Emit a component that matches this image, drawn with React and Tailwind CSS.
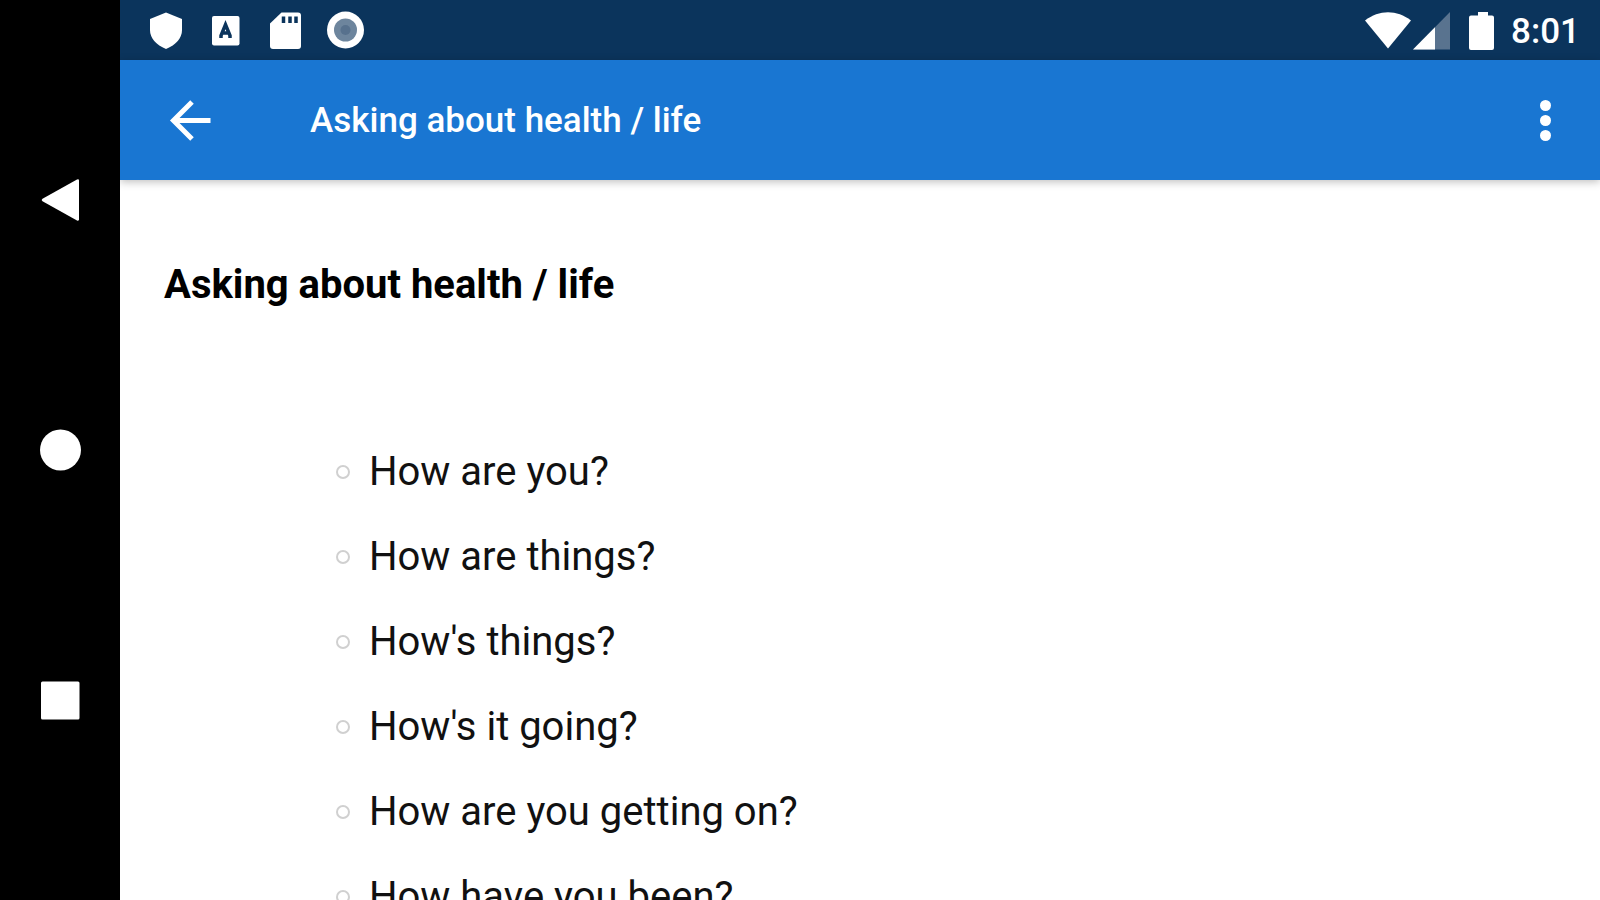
import React from "react";

const PHRASES = [
  "How are you?",
  "How are things?",
  "How's things?",
  "How's it going?",
  "How are you getting on?",
  "How have you been?",
];

const NAV_BUTTONS = [
  {
    label: "Back",
    shape: (
      <path
        d="M37 19.5 2.500 38.800q-1.800 1.200 0 2.400L37 60.500q2 .8 2-1.200V20.700q0-2-2-1.200Z"
      />
    ),
  },
  { label: "Home", shape: <circle cx="20.5" cy="40" r="20.5" /> },
  { label: "Recents", shape: <rect x="1" y="21.5" width="38.5" height="38" rx="1.5" /> },
];

const NavigationBar = () => (
  <nav className="flex w-[120px] shrink-0 flex-col items-center justify-center gap-[170px] bg-black">
    {NAV_BUTTONS.map((button) => (
      <button
        key={button.label}
        type="button"
        aria-label={button.label}
        className="flex h-20 w-full items-center justify-center"
      >
        <svg width="41" height="80" viewBox="0 0 41 80" fill="#fff">
          {button.shape}
        </svg>
      </button>
    ))}
  </nav>
);

const StatusBar = () => (
  <div className="flex h-[60px] shrink-0 items-center justify-between bg-[#0b345c] pr-5 pl-4 text-white">
    <div className="flex">
      <svg width="60" height="60" viewBox="0 0 60 60" fill="#fff">
        <path d="M30 12.5 46 19v11c0 8-6 15-16 19C20 45 14 38 14 30V19Z" />
      </svg>
      <svg width="60" height="60" viewBox="0 0 60 60">
        <rect x="16" y="16" width="27.5" height="29.5" rx="2" fill="#fff" />
        <path
          d="M25 38v-2.5l4.5-11 4.5 11V38M26.5 33h6"
          fill="none"
          stroke="#0b345c"
          strokeWidth="3.5"
        />
      </svg>
      <svg width="60" height="60" viewBox="0 0 60 60">
        <path
          d="M25.5 12.5H42a3 3 0 0 1 3 3V46a3 3 0 0 1-3 3H17a3 3 0 0 1-3-3V23.5Z"
          fill="#fff"
        />
        <path d="M27.5 16.5V23M34 16.5V23M40 16.5V23" stroke="#0b345c" strokeWidth="3.5" />
      </svg>
      <svg width="60" height="60" viewBox="0 0 60 60">
        <circle cx="29.5" cy="30" r="18.5" fill="#fff" />
        <circle cx="29.5" cy="30" r="11.5" fill="#6d859d" />
        <circle cx="29.5" cy="30" r="5" fill="#57718d" />
      </svg>
    </div>
    <div className="flex items-center">
      <svg width="46" height="60" viewBox="0 0 46 60" fill="#fff">
        <path d="M0 20.5C14 9.500 32 9.500 46 20.5L23 48.5Z" />
      </svg>
      <svg width="50" height="60" viewBox="0 0 50 60">
        <path d="M39 12v37.5H2Z" fill="#59738f" />
        <path d="M24 27.2v22.3H2Z" fill="#fff" />
      </svg>
      <svg width="46" height="60" viewBox="0 0 46 60" fill="#fff">
        <path d="M17 12h10v3.5h4a2 2 0 0 1 2 2V48a2 2 0 0 1-2 2H10a2 2 0 0 1-2-2V17.5a2 2 0 0 1 2-2h7Z" />
      </svg>
      <span className="ml-1 pt-1 text-[35px] leading-[56px] font-medium">8:01</span>
    </div>
  </div>
);

const AppBar = () => (
  <header className="z-10 flex h-[120px] shrink-0 items-center bg-[#1976d2] pr-6 pl-10 text-white shadow-[0_2px_8px_rgba(0,0,0,0.25)]">
    <button type="button" aria-label="Navigate up" className="flex size-[60px] items-center justify-center">
      <svg width="42" height="42" viewBox="0 0 42 42" fill="none" stroke="#fff" strokeWidth="5">
        <path d="M41.5 21.5H4.5M23 3 4.5 21.5 23 40" />
      </svg>
    </button>
    <h1 className="ml-[90px] flex-1 pt-0.5 text-[35px] leading-[48px] font-medium">
      Asking about health / life
    </h1>
    <button type="button" aria-label="More options" className="flex size-[60px] items-center justify-center">
      <svg width="12" height="42" viewBox="0 0 12 42" fill="#fff">
        <circle cx="5.5" cy="6.5" r="5.5" />
        <circle cx="5.5" cy="21.5" r="5.5" />
        <circle cx="5.5" cy="36.5" r="5.5" />
      </svg>
    </button>
  </header>
);

const App = () => {
  return (
    <div className="flex h-screen overflow-hidden bg-white font-[Roboto,sans-serif]">
      <NavigationBar />
      <div className="flex min-w-0 flex-1 flex-col">
        <StatusBar />
        <AppBar />
        <main className="min-h-0 flex-1 overflow-y-auto px-11 pt-[81px] text-[40px] text-black [scrollbar-width:none]">
          <h2 className="leading-[48px] font-bold">Asking about health / life</h2>
          <ul className="mt-[140px] flex flex-col gap-10 pl-[172px]">
            {PHRASES.map((phrase) => (
              <li key={phrase} className="flex items-center gap-[19px] leading-[45px] text-[#111]">
                <span className="size-[14px] rounded-full border-2 border-[#d0d0d0]"></span>
                {phrase}
              </li>
            ))}
          </ul>
        </main>
      </div>
    </div>
  );
};

export default App;
